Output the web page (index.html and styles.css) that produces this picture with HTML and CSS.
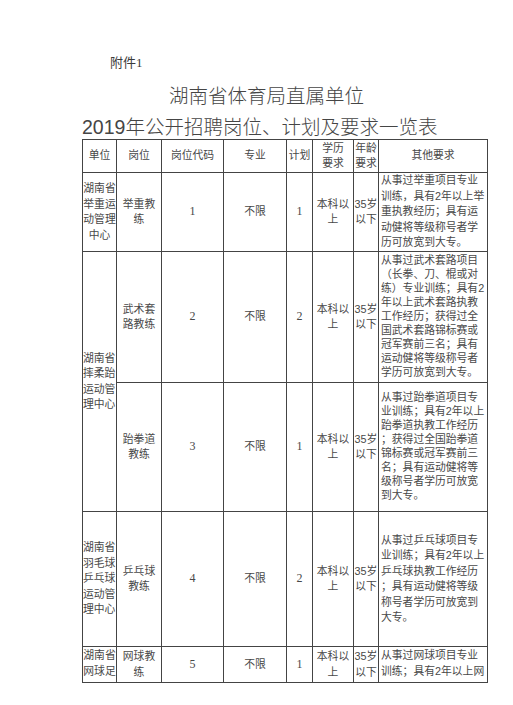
FILE: index.html
```html
<!DOCTYPE html>
<html lang="zh-CN">
<head>
<meta charset="utf-8">
<title>湖南省体育局直属单位2019年公开招聘岗位、计划及要求一览表</title>
<link rel="stylesheet" href="styles.css">
</head>
<body>
<div class="page">
  <div class="annex">附件1</div>
  <div class="title t1">湖南省体育局直属单位</div>
  <div class="title t2">2019年公开招聘岗位、计划及要求一览表</div>
  <table class="plan">
    <colgroup>
      <col class="c-unit"><col class="c-post"><col class="c-code"><col class="c-major"><col class="c-count"><col class="c-edu"><col class="c-age"><col class="c-other">
    </colgroup>
    <thead>
      <tr class="h-head">
        <th>单位</th><th>岗位</th><th>岗位代码</th><th>专业</th><th>计划</th><th>学历<br>要求</th><th>年龄<br>要求</th><th>其他要求</th>
      </tr>
    </thead>
    <tbody>
      <tr class="h-r1">
        <td>湖南省<br>举重运<br>动管理<br>中心</td>
        <td>举重教<br>练</td>
        <td class="num">1</td>
        <td>不限</td>
        <td class="num">1</td>
        <td>本科以<br>上</td>
        <td>35岁<br>以下</td>
        <td class="other">从事过举重项目专业<br>训练，具有2年以上举<br>重执教经历；具有运<br>动健将等级称号者学<br>历可放宽到大专。</td>
      </tr>
      <tr class="h-r2">
        <td rowspan="2" class="unit-left">湖南省<br>摔柔跆<br>运动管<br>理中心</td>
        <td>武术套<br>路教练</td>
        <td class="num">2</td>
        <td>不限</td>
        <td class="num">2</td>
        <td>本科以<br>上</td>
        <td>35岁<br>以下</td>
        <td class="other tight">从事过武术套路项目<br>（长拳、刀、棍或对<br>练）专业训练；具有2<br>年以上武术套路执教<br>工作经历；获得过全<br>国武术套路锦标赛或<br>冠军赛前三名；具有<br>运动健将等级称号者<br>学历可放宽到大专。</td>
      </tr>
      <tr class="h-r3">
        <td>跆拳道<br>教练</td>
        <td class="num">3</td>
        <td>不限</td>
        <td class="num">1</td>
        <td>本科以<br>上</td>
        <td>35岁<br>以下</td>
        <td class="other tight">从事过跆拳道项目专<br>业训练；具有2年以上<br>跆拳道执教工作经历<br>；获得过全国跆拳道<br>锦标赛或冠军赛前三<br>名；具有运动健将等<br>级称号者学历可放宽<br>到大专。</td>
      </tr>
      <tr class="h-r4">
        <td class="unit-left">湖南省<br>羽毛球<br>乒乓球<br>运动管<br>理中心</td>
        <td>乒乓球<br>教练</td>
        <td class="num">4</td>
        <td>不限</td>
        <td class="num">2</td>
        <td>本科以<br>上</td>
        <td>35岁<br>以下</td>
        <td class="other">从事过乒乓球项目专<br>业训练；具有2年以上<br>乒乓球执教工作经历<br>；具有运动健将等级<br>称号者学历可放宽到<br>大专。</td>
      </tr>
      <tr class="h-r5">
        <td class="top"><div class="clip">湖南省<br>网球足</div></td>
        <td>网球教<br>练</td>
        <td class="num">5</td>
        <td>不限</td>
        <td class="num">1</td>
        <td>本科以<br>上</td>
        <td>35岁<br>以下</td>
        <td class="other top"><div class="clip">从事过网球项目专业<br>训练；具有2年以上网</div></td>
      </tr>
    </tbody>
  </table>
</div>
</body>
</html>
```

FILE: styles.css
```css
html, body {
  margin: 0;
  padding: 0;
  background: #ffffff;
}

body {
  color: #333333;
  font-family: "Liberation Sans", "Noto Sans CJK SC", sans-serif;
}

.page {
  width: 513px;
  height: 705px;
  overflow: hidden;
}

.annex {
  padding: 55px 0 0 110px;
  font-family: "Liberation Serif", "Noto Sans CJK SC", serif;
  font-size: 13px;
  line-height: 16px;
  color: #3a3a3a;
}

.title {
  font-size: 19.5px;
  white-space: nowrap;
  color: #454545;
  font-weight: 300;
}

.t1 {
  margin-top: 13px;
  line-height: 25px;
  padding-left: 169px;
}

.t2 {
  margin-top: 7px;
  line-height: 23px;
  padding-left: 82px;
}

.plan {
  margin-left: 82px;
  border-collapse: collapse;
  table-layout: fixed;
  width: 406px;
  font-size: 10.8px;
  line-height: 15.5px;
}

.c-unit { width: 34px; }
.c-post { width: 45px; }
.c-code { width: 62px; }
.c-major { width: 63px; }
.c-count { width: 26px; }
.c-edu { width: 41px; }
.c-age { width: 25px; }
.c-other { width: 109px; }

.plan th,
.plan td {
  border: 1px solid #444444;
  padding: 0;
  text-align: center;
  vertical-align: middle;
  white-space: nowrap;
  font-weight: normal;
  overflow: hidden;
  color: #484848;
}

.plan .num {
  font-family: "Liberation Serif", "Noto Sans CJK SC", serif;
  font-size: 12px;
}

.plan .other {
  text-align: left;
  padding-left: 2px;
}

.plan .tight {
  line-height: 13.9px;
}

.plan .top {
  vertical-align: top;
}

.plan .unit-left {
  text-align: left;
}

.clip {
  height: 34px;
  overflow: hidden;
  padding-top: 0;
  line-height: 16px;
}

.h-head { height: 33px; }
.h-r1 { height: 79px; }
.h-r2 { height: 131px; }
.h-r3 { height: 129px; }
.h-r4 { height: 135px; }
.h-r5 { height: 36px; }
```
